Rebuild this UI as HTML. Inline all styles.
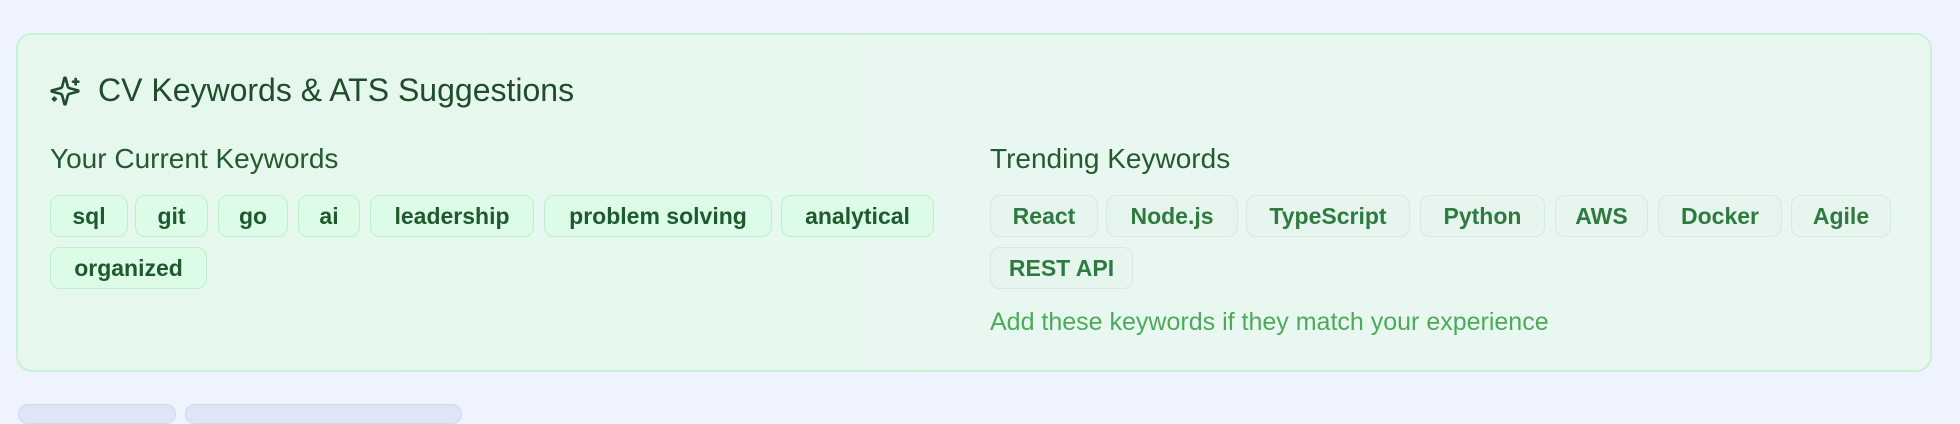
<!DOCTYPE html>
<html><head><meta charset="utf-8"><style>
*{box-sizing:border-box;margin:0;padding:0}
body{width:1960px;height:412px;background:#eef3fd;font-family:"Liberation Sans",sans-serif;position:relative;overflow:hidden}
.card{position:absolute;left:16px;top:33px;width:1916px;height:339px;border:2px solid #c8f2d4;border-radius:16px;background:linear-gradient(90deg,#e6f8ee,#e9f7f1)}
.t{position:absolute;left:98px;top:72px;font-size:32px;color:#1f4d2b;white-space:nowrap}
.h{position:absolute;top:143px;font-size:28px;color:#245a30;white-space:nowrap}
.c{position:absolute;height:42px;line-height:41px;border-radius:10px;text-align:center;font-size:23px;font-weight:bold;white-space:nowrap}
.a{background:#dcfce7;border:1.5px solid #bbf0cc;color:#1e5a2e}
.b{background:#e6f6ee;border:1.5px solid #d4eadc;color:#2e7a40}
.n{position:absolute;left:990px;top:308px;font-size:25px;color:#4caa5a;white-space:nowrap}
.tab{position:absolute;top:404px;height:20px;border:1.5px solid #cfd8ee;border-radius:10px;background:#dee5f7}
</style></head><body>
<div class="card"></div>
<svg style="position:absolute;left:49px;top:75px" width="32" height="32" viewBox="0 0 24 24" fill="none" stroke="#1f4d2b" stroke-width="2" stroke-linecap="round" stroke-linejoin="round"><path d="M9.94 15.5A2 2 0 0 0 8.5 14.06l-6.14-1.58a.5.5 0 0 1 0-.96L8.5 9.94A2 2 0 0 0 9.94 8.5l1.58-6.14a.5.5 0 0 1 .96 0L14.06 8.5A2 2 0 0 0 15.5 9.94l6.14 1.58a.5.5 0 0 1 0 .96L15.5 14.06a2 2 0 0 0-1.44 1.44l-1.58 6.14a.5.5 0 0 1-.96 0z"/><path d="M20 3v4M22 5h-4M4 17v2M5 18H3"/></svg>
<div class="t">CV Keywords &amp; ATS Suggestions</div>
<div class="h" style="left:50px">Your Current Keywords</div>
<div class="h" style="left:990px">Trending Keywords</div>
<div class="c a" style="left:50px;top:195px;width:78px">sql</div>
<div class="c a" style="left:135px;top:195px;width:73px">git</div>
<div class="c a" style="left:218px;top:195px;width:70px">go</div>
<div class="c a" style="left:298px;top:195px;width:62px">ai</div>
<div class="c a" style="left:370px;top:195px;width:164px">leadership</div>
<div class="c a" style="left:544px;top:195px;width:228px">problem solving</div>
<div class="c a" style="left:781px;top:195px;width:153px">analytical</div>
<div class="c a" style="left:50px;top:247px;width:157px">organized</div>
<div class="c b" style="left:990px;top:195px;width:108px">React</div>
<div class="c b" style="left:1106px;top:195px;width:132px">Node.js</div>
<div class="c b" style="left:1246px;top:195px;width:164px">TypeScript</div>
<div class="c b" style="left:1420px;top:195px;width:125px">Python</div>
<div class="c b" style="left:1555px;top:195px;width:93px">AWS</div>
<div class="c b" style="left:1658px;top:195px;width:124px">Docker</div>
<div class="c b" style="left:1791px;top:195px;width:100px">Agile</div>
<div class="c b" style="left:990px;top:247px;width:143px">REST API</div>
<div class="n">Add these keywords if they match your experience</div>
<div class="tab" style="left:18px;width:158px"></div>
<div class="tab" style="left:185px;width:277px"></div>
</body></html>
